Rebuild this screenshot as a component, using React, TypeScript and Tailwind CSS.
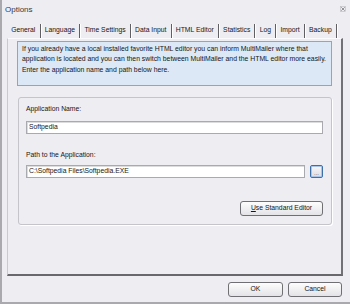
export default function App() {
  const tabs = ["General", "Language", "Time Settings", "Data Input", "HTML Editor", "Statistics", "Log", "Import", "Backup"];
  return (
    <div className="w-[350px] h-[304px] bg-[#eeedf2] border-l-2 border-b-2 border-[#a9a9ae] flex flex-col text-[#161616] overflow-hidden font-['Liberation_Sans',Arial,sans-serif]">
      {/* Title bar */}
      <div className="h-[19px] shrink-0 flex items-center justify-between pl-[3px] pr-[4px]">
        <span className="text-[8px] leading-none text-[#3a3a3a]">Options</span>
        <svg width="6" height="6" viewBox="0 0 6 6" className="mt-[-1px]">
          <rect x="0.5" y="0.5" width="5" height="5" fill="none" stroke="#b8b8bc" strokeWidth="0.6" />
          <path d="M1.3 1.3 L4.7 4.7 M4.7 1.3 L1.3 4.7" stroke="#7a7a7e" strokeWidth="0.8" />
        </svg>
      </div>

      {/* Tabs + panel */}
      <div className="ml-[5px] mr-[7px] flex flex-col">
        <div className="mt-[4px] h-[15px] flex items-stretch">
          {tabs.map((t) => (
            <div key={t} className="flex items-stretch">
              <div className="px-[4.2px] flex items-center text-[6.8px] leading-none whitespace-nowrap">{t}</div>
              <div className="w-px mt-[1px] bg-[#5f5f64] shadow-[1px_0_0_#ffffff]" />
            </div>
          ))}
        </div>

        <div className="h-[238px] border-t border-l border-t-[#fbfbfd] border-l-[#c9c9ce] border-r-2 border-b-2 border-r-[#727276] border-b-[#69696d] px-[9px] pt-[2px] flex flex-col">
          {/* Info box */}
          <div className="h-[45px] bg-[#dce8f5] border border-[#8fa6c2] px-[4px] pt-[1.5px] text-[6.85px] leading-[10.5px] whitespace-nowrap overflow-hidden">
            <div>If you already have a local installed favorite HTML editor you can inform MultiMailer where that</div>
            <div>application is located and you can then switch between MultiMailer and the HTML editor more easily.</div>
            <div>Enter the application name and path below here.</div>
          </div>

          {/* Group box */}
          <div className="mt-[11px] ml-px h-[128px] rounded-[3px] border border-[#c4c4ca] shadow-[1px_1px_0_#ffffff] pl-[7px] pr-[8px] pt-[7px] flex flex-col text-[6.8px]">
            <div className="h-[8px] leading-[8px]">Application Name:</div>
            <div className="mt-[7.5px] h-[13px] bg-white border border-[#a9a9b0] shadow-[inset_1px_1px_0_#dcdcdc] flex items-center pl-[2px] leading-none">
              Softpedia
            </div>
            <div className="mt-[17px] h-[8px] leading-[8px]">Path to the Application:</div>
            <div className="mt-[6.5px] h-[13px] flex gap-[5px]">
              <div className="flex-1 bg-white border border-[#a9a9b0] shadow-[inset_1px_1px_0_#dcdcdc] flex items-center pl-[2px] leading-none">
                C:\Softpedia Files\Softpedia.EXE
              </div>
              <div className="w-[13px] rounded-[2px] border border-[#3d6fa8] bg-gradient-to-b from-[#f8f8fa] to-[#dcdce2] shadow-[inset_0_0_0_1px_#a9c6ea] flex items-end justify-center text-[6px] leading-[8px] text-[#555]">
                ...
              </div>
            </div>
            <div className="mt-[22.5px] flex justify-end">
              <div className="w-[83px] h-[15px] rounded-[3px] border border-[#6f6f74] bg-gradient-to-b from-[#fdfdfd] to-[#e4e4e8] flex items-center justify-center text-[6.8px] leading-none">
                <span><span className="underline">U</span>se Standard Editor</span>
              </div>
            </div>
          </div>
        </div>
      </div>

      {/* Bottom buttons */}
      <div className="mt-[6px] mr-[8px] flex justify-end gap-[5px]">
        <div className="w-[55px] h-[15px] rounded-[3px] border border-[#6f6f74] bg-gradient-to-b from-[#fdfdfd] to-[#e4e4e8] flex items-center justify-center text-[6.8px] leading-none">OK</div>
        <div className="w-[54px] h-[15px] rounded-[3px] border border-[#6f6f74] bg-gradient-to-b from-[#fdfdfd] to-[#e4e4e8] flex items-center justify-center text-[6.8px] leading-none">Cancel</div>
      </div>
    </div>
  );
}
